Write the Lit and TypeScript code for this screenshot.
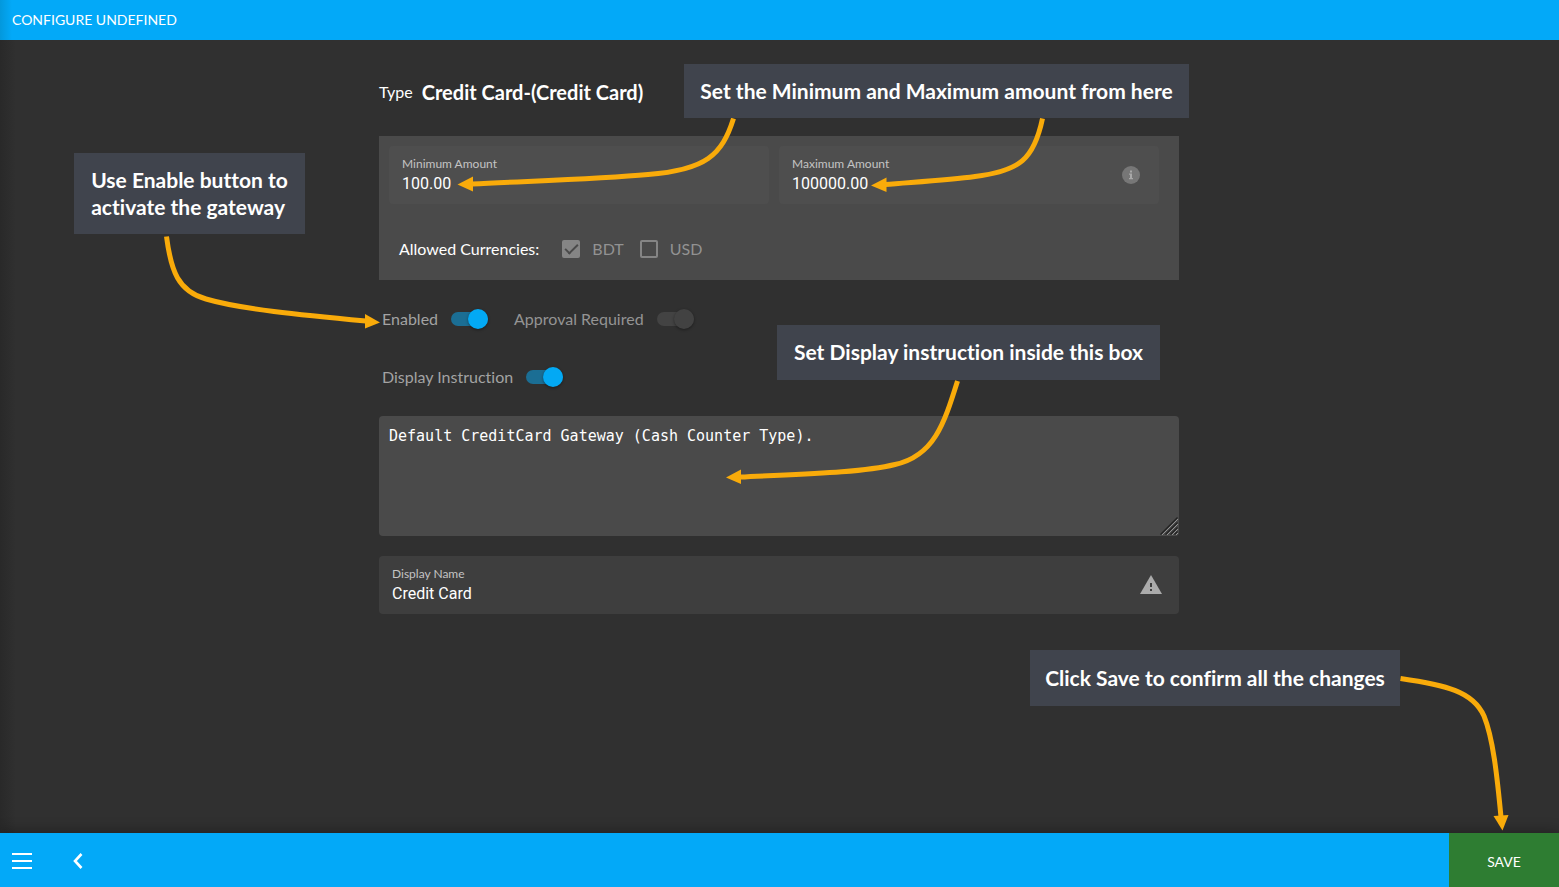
import { LitElement, html, svg, css } from "lit";
import { customElement, property } from "lit/decorators.js";

/** Filled text field with a floating label and an optional trailing icon. */
@customElement("filled-field")
class FilledField extends LitElement {
  @property() label = "";
  @property() value = "";
  @property() tone = "panel";

  static styles = css`
    :host {
      display: block;
      min-width: 0;
    }
    .box {
      display: flex;
      align-items: center;
      height: 58px;
      box-sizing: border-box;
      padding: 0 13px;
      border-radius: 4px;
      background: #4e4e4e;
    }
    .box.page {
      padding-right: 16px;
      background: #3e3e3e;
    }
    .text {
      flex: 1;
      min-width: 0;
      display: flex;
      flex-direction: column;
    }
    label {
      font: 12px/16px Lato, sans-serif;
      color: #c4c4c4;
    }
    input {
      border: 0;
      padding: 1px 0 0;
      margin: 0;
      width: 100%;
      height: 22px;
      box-sizing: border-box;
      background: transparent;
      outline: 0;
      color: #fff;
      font: 16px/20px Roboto, sans-serif;
    }
  `;

  render() {
    return html`
      <div class="box ${this.tone}">
        <div class="text">
          <label for="field">${this.label}</label>
          <input id="field" type="text" .value=${this.value} />
        </div>
        <slot></slot>
      </div>
    `;
  }
}

/** Label followed by a sliding switch. */
@customElement("toggle-switch")
class ToggleSwitch extends LitElement {
  @property() label = "";
  @property({ type: Boolean }) locked = false;

  static styles = css`
    label {
      display: flex;
      align-items: center;
      gap: 13px;
      height: 24px;
      font-family: Lato, sans-serif;
      font-size: 16px;
      line-height: 24px;
      color: #a3a3a3;
    }
    label.locked {
      color: #949494;
    }
    input {
      appearance: none;
      position: relative;
      margin: 0;
      width: 37px;
      height: 14px;
      border-radius: 7px;
      background: #1b6e94;
    }
    input::before {
      content: "";
      position: absolute;
      top: -3px;
      right: 0;
      width: 20px;
      height: 20px;
      border-radius: 50%;
      background: #03a9f4;
      box-shadow: 0 1px 3px rgba(0, 0, 0, 0.4);
    }
    input:disabled {
      background: #434343;
    }
    input:disabled::before {
      background: #424242;
    }
  `;

  render() {
    return html`
      <label class=${this.locked ? "locked" : ""}>
        <span>${this.label}</span>
        <input type="checkbox" role="switch" checked ?disabled=${this.locked} />
      </label>
    `;
  }
}

const arrow = (line: string, head: string) => svg`
  <path class="line" d=${line}></path>
  <path class="head" d=${head}></path>
`;

@customElement("app-root")
class AppRoot extends LitElement {
  static styles = css`
    :host {
      display: flex;
      flex-direction: column;
      min-height: 100vh;
      background: linear-gradient(to right, #292929, #303030 16px);
      color: #fff;
      font: 16px/24px Lato, sans-serif;
      font-variant-ligatures: none;
    }
    header {
      height: 40px;
      padding: 0 12px;
      background: linear-gradient(to right, #0398dc, #03a9f8 12px);
      font-size: 14px;
      line-height: 40px;
    }
    h1 {
      margin: 0;
      font-size: inherit;
      font-weight: 400;
    }
    main {
      position: relative;
      flex: 1;
      padding: 0 21px 0 20px;
    }
    .column {
      position: relative;
      max-width: 800px;
      margin: 0 auto;
    }
    .type {
      display: flex;
      align-items: center;
      gap: 9px;
      padding: 40px 0 32px;
    }
    .type strong {
      font-size: 20px;
      font-weight: 700;
    }
    .panel {
      padding: 10px 20px 19px 10px;
      background: #4a4a4a;
    }
    .amounts {
      display: grid;
      grid-template-columns: 1fr 1fr;
      gap: 10px;
    }
    .icon {
      display: block;
      flex: none;
    }
    .currencies {
      display: flex;
      align-items: center;
      margin: 33px 0 0;
      padding: 0 10px;
      gap: 16px;
    }
    .currencies .name {
      margin-right: 7px;
    }
    .tick {
      display: flex;
      align-items: center;
      gap: 12px;
      color: #929292;
    }
    .tick input {
      appearance: none;
      box-sizing: border-box;
      display: grid;
      place-items: center;
      margin: 0;
      width: 18px;
      height: 18px;
      border: 2px solid #858585;
      border-radius: 2px;
    }
    .tick input:checked {
      background: #858585;
    }
    .tick input:checked::before {
      content: "";
      width: 13px;
      height: 7px;
      box-sizing: border-box;
      border: solid #4a4a4a;
      border-width: 0 0 2px 2px;
      transform: translateY(-2px) rotate(-45deg);
    }
    .switches {
      display: flex;
      gap: 26px;
      padding: 0 3px;
      margin-top: 27px;
    }
    .switches + .switches {
      margin-top: 34px;
    }
    .instruction {
      position: relative;
      margin: 27px 0 20px;
    }
    textarea {
      display: block;
      box-sizing: border-box;
      width: 100%;
      height: 120px;
      padding: 10px;
      border: 0;
      border-radius: 4px;
      outline: 0;
      resize: none;
      background: #4a4a4a;
      color: #fff;
      font: 15px/20px "DejaVu Sans Mono", monospace;
    }
    .grip {
      position: absolute;
      right: 0;
      bottom: 0;
    }
    footer {
      display: flex;
      height: 54px;
      position: relative;
      background: #03a9f8;
      box-shadow: 0 -2px 12px rgba(0, 0, 0, 0.3);
    }
    button {
      border: 0;
      padding: 0;
      margin: 0;
      background: transparent;
      color: #fff;
      font: 14px/20px Lato, sans-serif;
    }
    .tool {
      display: grid;
      place-items: center;
      width: 44px;
      margin-right: 12px;
      padding-top: 2px;
    }
    .save {
      width: 110px;
      margin-left: auto;
      padding-top: 3px;
      background: #2e7d32;
    }
    .note {
      position: absolute;
      z-index: 2;
      box-sizing: border-box;
      display: flex;
      align-items: center;
      justify-content: center;
      padding-bottom: 2px;
      background: #40444d;
      font-size: 21px;
      font-weight: 700;
      line-height: 27px;
      white-space: nowrap;
    }
    .note.enable {
      left: -305px;
      top: 113px;
      width: 231px;
      height: 81px;
    }
    .note.amount {
      left: 305px;
      top: 24px;
      width: 505px;
      height: 54px;
    }
    .note.display {
      left: 398px;
      top: 285px;
      width: 383px;
      height: 55px;
    }
    .note.confirm {
      right: 159px;
      bottom: 127px;
      width: 370px;
      height: 56px;
    }
    .arrows {
      position: absolute;
      z-index: 1;
      overflow: visible;
      pointer-events: none;
    }
    .arrows.guide {
      left: 0;
      top: 0;
    }
    .arrows.corner {
      right: 0;
      bottom: 0;
    }
    .line {
      fill: none;
      stroke: #f9ab0a;
      stroke-width: 5;
    }
    .head {
      fill: #f9ab0a;
    }
  `;

  render() {
    return html`
      <header><h1>CONFIGURE UNDEFINED</h1></header>
      <main>
        <div class="column">
          <div class="type"><span>Type</span><strong>Credit Card-(Credit Card)</strong></div>

          <section class="panel">
            <div class="amounts">
              <filled-field label="Minimum Amount" value="100.00"></filled-field>
              <filled-field label="Maximum Amount" value="100000.00">
                <svg class="icon" width="30" height="18" viewBox="0 0 30 18" aria-hidden="true">
                  <circle cx="15" cy="9" r="9" fill="#777"></circle>
                  <path d="M14 4.500h2v2h-2zM13 7.500h3v4.500h1v1.200h-4v-1.200h1v-3.300h-1z" fill="#a8a8a8"></path>
                </svg>
              </filled-field>
            </div>
            <div class="currencies" role="group" aria-labelledby="currencies">
              <span class="name" id="currencies">Allowed Currencies:</span>
              <label class="tick"><input type="checkbox" checked disabled />BDT</label>
              <label class="tick"><input type="checkbox" disabled />USD</label>
            </div>
          </section>

          <div class="switches">
            <toggle-switch label="Enabled"></toggle-switch>
            <toggle-switch label="Approval Required" locked></toggle-switch>
          </div>
          <div class="switches">
            <toggle-switch label="Display Instruction"></toggle-switch>
          </div>

          <div class="instruction">
            <textarea
              aria-label="Display Instruction"
              spellcheck="false"
              .value=${"Default CreditCard Gateway (Cash Counter Type)."}
            ></textarea>
            <svg class="grip" width="19" height="19" viewBox="0 0 19 19" aria-hidden="true">
              <path d="M0.500 17.500L17.500 0.500M5.500 17.500L17.500 5.500M10.500 17.500l7-7M14.500 17.500l3-3" stroke="#222" stroke-width="1.200"></path>
              <path d="M2 18L18 2M7 18L18 7M12 18l6-6M16 18l2-2" stroke="#929292"></path>
            </svg>
          </div>

          <filled-field tone="page" label="Display Name" value="Credit Card">
            <svg class="icon" width="24" height="20" viewBox="0 0 24 20" aria-hidden="true">
              <path d="M12 0L23 19H1z" fill="#ababab"></path>
              <path d="M11 8v4h2V8zM11 14v2h2v-2z" fill="#3e3e3e"></path>
            </svg>
          </filled-field>

          <div class="note enable">Use Enable button to<br />activate the gateway</div>
          <div class="note amount">Set the Minimum and Maximum amount from here</div>
          <div class="note display">Set Display instruction inside this box</div>
          <svg class="arrows guide" width="800" height="574" viewBox="379 40 800 574" aria-hidden="true">
            ${arrow("M733.5 118.500C722 155 706 170 648 174.500C600 179 530 181 472 184", "M457.500 184.500L473 176.500V191.500z")}
            ${arrow("M1042.500 118.500C1034 159 1020 171 975 176.500C950 180 915 182 885 184.500", "M871 185.500L886.500 177.500V192z")}
            ${arrow("M166.500 236.500C171 271 178 291 206 299C240 309 300 315 366 321", "M380 322.500L365 314V328.500z")}
            ${arrow("M957.500 381C944 424 934 456 895 464.500C860 473 800 474 740 477", "M726 477.500L741 469.500V484z")}
          </svg>
        </div>

        <div class="note confirm">Click Save to confirm all the changes</div>
        <svg class="arrows corner" width="160" height="160" viewBox="1399 673 160 160" aria-hidden="true">
          ${arrow("M1400.500 678.500C1445 685 1473 691 1484 716C1493 738 1497 775 1501 817", "M1502.500 830.500L1493.500 816L1508.500 815z")}
        </svg>
      </main>
      <footer>
        <button class="tool" aria-label="Menu">
          <svg width="20" height="16" viewBox="0 0 20 16" aria-hidden="true">
            <path d="M0 1h20M0 8h20M0 15h20" stroke="#fff" stroke-width="2"></path>
          </svg>
        </button>
        <button class="tool" aria-label="Back">
          <svg width="10" height="16" viewBox="0 0 10 16" aria-hidden="true">
            <path d="M8.500 1L2 8l6.500 7" fill="none" stroke="#fff" stroke-width="2.600"></path>
          </svg>
        </button>
        <button class="save">SAVE</button>
      </footer>
    `;
  }
}
